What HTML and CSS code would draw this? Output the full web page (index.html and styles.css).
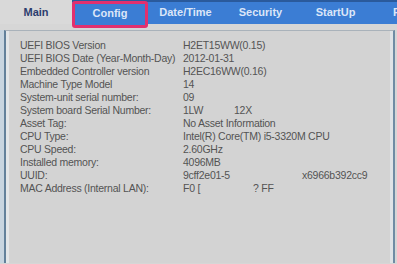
FILE: index.html
```html
<!DOCTYPE html>
<html lang="en">
<head>
    <meta charset="UTF-8">
    <title>BIOS Setup</title>
    <link rel="stylesheet" href="styles.css">
</head>
<body>
    <div class="tabs">
        <div class="tab main">Main</div>
        <div class="bar">
            <div class="tab config">Config</div>
            <div class="tab">Date/Time</div>
            <div class="tab">Security</div>
            <div class="tab">StartUp</div>
            <div class="tab last">Restart</div>
        </div>
    </div>
    <div class="panel">
        <ul class="info">
            <li><span class="label">UEFI BIOS Version</span><span class="value">H2ET15WW(0.15)</span></li>
            <li><span class="label">UEFI BIOS Date (Year-Month-Day)</span><span class="value">2012-01-31</span></li>
            <li><span class="label">Embedded Controller version</span><span class="value">H2EC16WW(0.16)</span></li>
            <li><span class="label">Machine Type Model</span><span class="value">14</span></li>
            <li><span class="label">System-unit serial number:</span><span class="value">09</span></li>
            <li><span class="label">System board Serial Number:</span><span class="value"><span class="part w51">1LW</span>12X</span></li>
            <li><span class="label">Asset Tag:</span><span class="value">No Asset Information</span></li>
            <li><span class="label">CPU Type:</span><span class="value">Intel(R) Core(TM) i5-3320M CPU</span></li>
            <li><span class="label">CPU Speed:</span><span class="value">2.60GHz</span></li>
            <li><span class="label">Installed memory:</span><span class="value">4096MB</span></li>
            <li><span class="label">UUID:</span><span class="value"><span class="part w119">9cff2e01-5</span>x6966b392cc9</span></li>
            <li><span class="label">MAC Address (Internal LAN):</span><span class="value"><span class="part w70">F0 [</span>? FF</span></li>
        </ul>
    </div>
</body>
</html>
```

FILE: styles.css
```css
* {
    padding: 0;
    margin: 0;
    list-style: none;
}
body {
    width: 397px;
    height: 264px;
    overflow: hidden;
    background-color: #d6d6d6;
    font-family: "Liberation Sans", Arial, sans-serif;
}
.tabs {
    display: flex;
    height: 24px;
}
.tab {
    width: 75px;
    flex-shrink: 0;
    height: 24px;
    line-height: 24px;
    text-align: center;
    font-size: 11px;
    font-weight: bold;
    white-space: nowrap;
    color: #dce6f8;
}
.main {
    width: 72px;
    color: #2c3d6e;
    background-color: #d9d9d9;
}
.bar {
    flex: 1;
    min-width: 0;
    display: flex;
    align-items: flex-start;
    background-color: #3b7dd4;
    border-top: 2px solid #2a5a9c;
}
.bar .tab {
    height: 22px;
    line-height: 20px;
}
.bar .last {
    width: auto;
    flex-shrink: 1;
    min-width: 0;
    overflow: hidden;
    text-align: left;
    padding-left: 20px;
}
.config {
    width: 76px;
    margin-top: -1px;
    height: 27px !important;
    line-height: 19px !important;
    border: 3px solid #e2306e;
    border-radius: 3px;
    background-color: #3b7dd4;
    position: relative;
    box-sizing: border-box;
}
.panel {
    margin: 6px 2px 0 4px;
    height: 233px;
    background-color: #d3d3d3;
    border-top: 1px solid #a9b2ba;
    border-left: 2px solid #62819b;
    border-right: 2px solid #6f8ca4;
    box-shadow: -4px 0 0 #c7d5e0, inset 3px 0 0 #e2e6e8, inset -3px 0 0 #dfe3e6;
    padding: 8px 0 0 14px;
    box-sizing: border-box;
}
.info li {
    display: flex;
    height: 13px;
    line-height: 13px;
    font-size: 10.5px;
    letter-spacing: -0.25px;
    white-space: nowrap;
    color: #545454;
}
.label {
    width: 163px;
    flex-shrink: 0;
}
.part {
    display: inline-block;
}
.w51 {
    width: 51px;
}
.w119 {
    width: 119px;
}
.w70 {
    width: 70px;
}
```
